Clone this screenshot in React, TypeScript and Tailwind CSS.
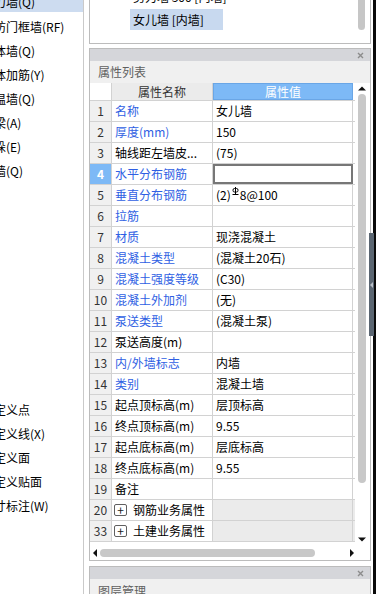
import React from "react";

type Row = {
  n: number;
  name: string;
  value?: React.ReactNode;
  blue?: boolean;
  selected?: boolean;
  group?: boolean;
};

const RebarMark = () => (
  <svg width="7" height="8" viewBox="0 0 7 8" className="inline-block align-top mt-[1px] mx-[1px]">
    <rect x="1" y="1.5" width="5" height="3.5" rx="1.5" fill="none" stroke="#000" strokeWidth="1" />
    <line x1="3.5" y1="0" x2="3.5" y2="7.5" stroke="#000" strokeWidth="1" />
    <line x1="0.5" y1="7.5" x2="6.5" y2="7.5" stroke="#000" strokeWidth="1" />
  </svg>
);

const rows: Row[] = [
  { n: 1, name: "名称", value: "女儿墙", blue: true },
  { n: 2, name: "厚度(mm)", value: "150", blue: true },
  { n: 3, name: "轴线距左墙皮...", value: "(75)" },
  { n: 4, name: "水平分布钢筋", value: "", blue: true, selected: true },
  {
    n: 5,
    name: "垂直分布钢筋",
    value: (
      <span>
        (2)
        <RebarMark />
        8@100
      </span>
    ),
    blue: true,
  },
  { n: 6, name: "拉筋", value: "", blue: true },
  { n: 7, name: "材质", value: "现浇混凝土", blue: true },
  { n: 8, name: "混凝土类型", value: "(混凝土20石)", blue: true },
  { n: 9, name: "混凝土强度等级", value: "(C30)", blue: true },
  { n: 10, name: "混凝土外加剂", value: "(无)", blue: true },
  { n: 11, name: "泵送类型", value: "(混凝土泵)", blue: true },
  { n: 12, name: "泵送高度(m)", value: "" },
  { n: 13, name: "内/外墙标志", value: "内墙", blue: true },
  { n: 14, name: "类别", value: "混凝土墙", blue: true },
  { n: 15, name: "起点顶标高(m)", value: "层顶标高" },
  { n: 16, name: "终点顶标高(m)", value: "9.55" },
  { n: 17, name: "起点底标高(m)", value: "层底标高" },
  { n: 18, name: "终点底标高(m)", value: "9.55" },
  { n: 19, name: "备注", value: "" },
  { n: 20, name: "钢筋业务属性", group: true },
  { n: 33, name: "土建业务属性", group: true },
];

const treeTop = ["人防门框墙(RF)", "砌体墙(Q)", "砌体加筋(Y)", "保温墙(Q)", "暗梁(A)", "墙垛(E)", "幕墙(Q)"];
const treeBottom = ["自定义点", "自定义线(X)", "自定义面", "自定义贴面", "尺寸标注(W)"];

const CloseX = () => (
  <svg width="7" height="7" viewBox="0 0 7 7">
    <path d="M1 1L6 6M6 1L1 6" stroke="#8c8c8c" strokeWidth="1.4" />
  </svg>
);

const PanelTitle = () => (
  <div className="h-[12px] bg-[#d5d6da] flex items-center justify-end pr-[6px]">
    <CloseX />
  </div>
);

export default function App() {
  return (
    <div
      className="relative w-[376px] h-[594px] overflow-hidden bg-white flex text-[12px] text-black"
      style={{ fontFamily: '"Noto Sans CJK SC", "Noto Sans", sans-serif' }}
    >
      {/* left tree */}
      <div className="w-[84px] shrink-0 overflow-hidden border-r border-[#cacaca]">
        <div className="mt-[-9px]">
          <div className="h-[21px] mb-[3px] bg-[#cddcf0] flex items-center">
            <span className="ml-[-18px] whitespace-nowrap">剪力墙(Q)</span>
          </div>
          {treeTop.map((t) => (
            <div key={t} className="h-[24px] flex items-center">
              <span className="ml-[-18px] whitespace-nowrap">{t}</span>
            </div>
          ))}
          <div className="mt-[215px]">
            {treeBottom.map((t) => (
              <div key={t} className="h-[24px] flex items-center">
                <span className="ml-[-18px] whitespace-nowrap">{t}</span>
              </div>
            ))}
          </div>
        </div>
      </div>

      <div className="w-[5px] shrink-0" />

      {/* panels */}
      <div className="w-[282px] shrink-0 flex flex-col">
        {/* component list */}
        <div className="h-[44px] shrink-0 border border-t-0 border-[#bcbcbc] flex overflow-hidden">
          <div className="flex-1 pl-[40px]">
            <div className="mt-[-12px] h-[21px] flex items-start pt-[3px] pl-[3px] whitespace-nowrap leading-none">剪力墙 300 [内墙]</div>
            <div className="h-[21px] w-[93px] bg-[#c8d9ef] flex items-center pl-[3px] whitespace-nowrap">女儿墙 [内墙]</div>
          </div>
          <div className="w-[15px]">
            <div className="mt-[-10px] ml-[3px] w-[7px] h-[40px] rounded-full bg-[#c6c6c6]" />
          </div>
        </div>

        {/* property list */}
        <div className="mt-[4px] h-[513px] shrink-0 border border-[#bcbcbc] flex flex-col">
          <PanelTitle />
          <div className="h-[22px] bg-[#f0f0f0] flex items-center pl-[8px] text-[#5f5f5f]">属性列表</div>
          <div className="flex">
            <div className="w-[265px]">
              <div className="h-[18px] flex border-b border-[#d2d2d2]">
                <div className="w-[22px] bg-white border-r border-[#d2d2d2]" />
                <div className="w-[101px] bg-[#ebebeb] border-r border-[#d2d2d2] flex items-center justify-center text-[#333]">
                  属性名称
                </div>
                <div className="w-[140px] bg-[#7db9f6] border border-[#6aa6e6] flex items-center justify-center text-white">
                  属性值
                </div>
              </div>
              {rows.map((r) => (
                <div key={r.n} className="h-[21px] flex border-b border-[#d2d2d2]">
                  <div
                    className={
                      r.selected
                        ? "w-[22px] bg-[#7db9f6] border-r border-[#d2d2d2] flex items-center justify-center text-white font-bold"
                        : "w-[22px] bg-[#f0f0f0] border-r border-[#d2d2d2] flex items-center justify-center text-[#333]"
                    }
                  >
                    {r.n}
                  </div>
                  {r.group ? (
                    <div className="w-[101px] bg-white border-r border-[#d2d2d2] flex items-center pl-[2px]">
                      <span className="w-[13px] h-[12px] border border-[#606060] rounded-[2px] flex items-center justify-center text-[12px] leading-none text-[#222]">
                        +
                      </span>
                      <span className="ml-[6px] whitespace-nowrap">{r.name}</span>
                    </div>
                  ) : (
                    <div
                      className={
                        r.blue
                          ? "w-[101px] bg-white border-r border-[#d2d2d2] flex items-center pl-[3px] text-[#2f5fe3] whitespace-nowrap overflow-hidden"
                          : "w-[101px] bg-white border-r border-[#d2d2d2] flex items-center pl-[3px] whitespace-nowrap overflow-hidden"
                      }
                    >
                      {r.name}
                    </div>
                  )}
                  <div
                    className={
                      r.selected
                        ? "w-[140px] bg-white border-2 border-[#777] border-r-[2px]"
                        : r.group
                        ? "w-[140px] bg-[#ebebeb] border-r border-[#d2d2d2]"
                        : "w-[140px] bg-white border-r border-[#d2d2d2] flex items-center pl-[3px] whitespace-nowrap"
                    }
                  >
                    {r.value}
                  </div>
                  <div className={r.group ? "flex-1 bg-[#ebebeb]" : "flex-1 bg-white"} />
                </div>
              ))}
            </div>
            {/* vertical scrollbar */}
            <div className="w-[15px] flex flex-col items-start pl-[3px]">
              <svg width="8" height="10" viewBox="0 0 8 10" className="mt-[1px]">
                <path d="M0 6.5L4 2.5L8 6.5Z" fill="#111" />
              </svg>
              <div className="w-[8px] h-[389px] rounded-full bg-[#c8c8c8]" />
              <div className="flex-1" />
              <svg width="8" height="6" viewBox="0 0 8 6" className="mb-[-1px]">
                <path d="M0 0.5L8 0.5L4 4.5Z" fill="#111" />
              </svg>
            </div>
          </div>
          {/* horizontal scrollbar */}
          <div className="flex-1 flex items-center pl-[2px] pt-[3px]">
            <svg width="6" height="8" viewBox="0 0 6 8">
              <path d="M5 0L1 4L5 8Z" fill="#111" />
            </svg>
            <div className="ml-[2px] w-[215px] h-[8px] rounded-full bg-[#c8c8c8]" />
            <div className="ml-[34px]">
              <svg width="6" height="8" viewBox="0 0 6 8">
                <path d="M1 0L5 4L1 8Z" fill="#111" />
              </svg>
            </div>
          </div>
        </div>

        {/* layer panel */}
        <div className="mt-[5px] h-[40px] shrink-0 border border-[#bcbcbc] flex flex-col">
          <PanelTitle />
          <div className="h-[23px] bg-[#f0f0f0] flex items-center pl-[8px] text-[#5f5f5f]">图层管理</div>
        </div>
      </div>

      {/* splitter */}
      <div className="flex-1 flex">
        <div className="w-[2px]" />
        <div className="flex-1 bg-[#0a0a0a]" />
      </div>

      {/* collapse handle */}
      <div className="absolute left-[369px] top-[233px] w-[5px] h-[103px] bg-[#5a6571] flex items-center justify-center">
        <svg width="3" height="6" viewBox="0 0 3 6">
          <path d="M3 0L0 3L3 6Z" fill="#b8bec6" />
        </svg>
      </div>
    </div>
  );
}
